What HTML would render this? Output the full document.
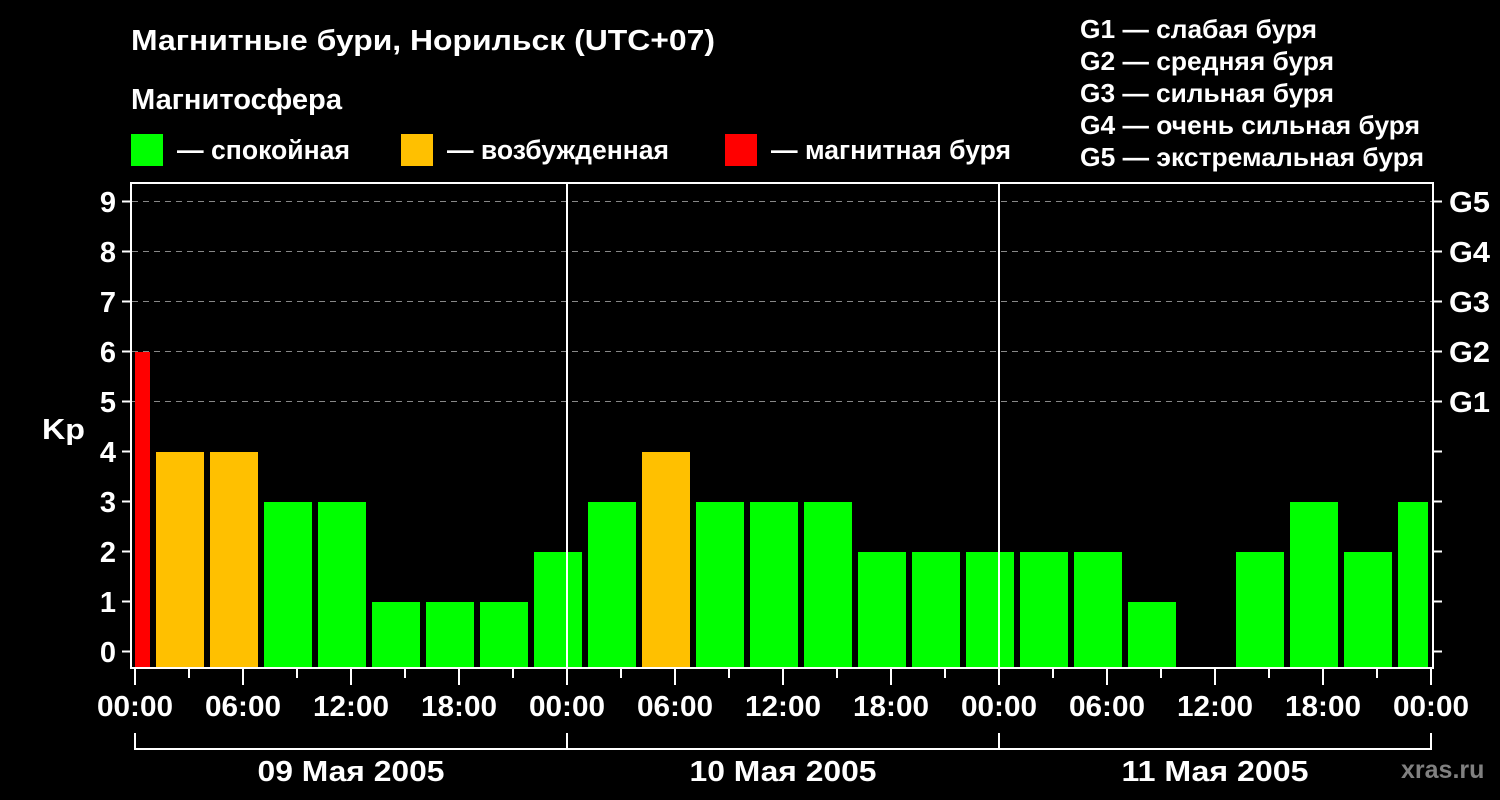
<!DOCTYPE html>
<html><head><meta charset="utf-8"><style>
html,body{margin:0;padding:0;background:#000;}
svg{display:block}
text{font-family:"Liberation Sans",sans-serif;font-weight:bold;fill:#fff}
</style></head><body>
<svg width="1500" height="800" viewBox="0 0 1500 800" xmlns="http://www.w3.org/2000/svg">
<rect width="1500" height="800" fill="#000"/>
<text x="131" y="50" font-size="29" textLength="584" lengthAdjust="spacingAndGlyphs">Магнитные бури, Норильск (UTC+07)</text>
<text x="131" y="109" font-size="29" textLength="211" lengthAdjust="spacingAndGlyphs">Магнитосфера</text>
<rect x="131" y="134" width="32" height="32" fill="#00ff00"/>
<text x="177" y="159" font-size="27" textLength="173" lengthAdjust="spacingAndGlyphs">— спокойная</text>
<rect x="401" y="134" width="32" height="32" fill="#ffc000"/>
<text x="447" y="159" font-size="27" textLength="222" lengthAdjust="spacingAndGlyphs">— возбужденная</text>
<rect x="725" y="134" width="32" height="32" fill="#ff0000"/>
<text x="771" y="159" font-size="27" textLength="240" lengthAdjust="spacingAndGlyphs">— магнитная буря</text>
<g font-size="26">
<text x="1080" y="38" textLength="237" lengthAdjust="spacingAndGlyphs">G1 — слабая буря</text>
<text x="1080" y="70" textLength="254" lengthAdjust="spacingAndGlyphs">G2 — средняя буря</text>
<text x="1080" y="102" textLength="254" lengthAdjust="spacingAndGlyphs">G3 — сильная буря</text>
<text x="1080" y="134" textLength="340" lengthAdjust="spacingAndGlyphs">G4 — очень сильная буря</text>
<text x="1080" y="166" textLength="344" lengthAdjust="spacingAndGlyphs">G5 — экстремальная буря</text>
</g>
<g stroke="#888" stroke-width="1" stroke-dasharray="6,5">
<line x1="132" y1="201.5" x2="1432" y2="201.5"/>
<line x1="132" y1="251.5" x2="1432" y2="251.5"/>
<line x1="132" y1="301.5" x2="1432" y2="301.5"/>
<line x1="132" y1="351.5" x2="1432" y2="351.5"/>
<line x1="132" y1="401.5" x2="1432" y2="401.5"/>
</g>
<rect x="135" y="352" width="15" height="316" fill="#ff0000"/>
<g>
<rect x="156" y="452" width="48" height="216" fill="#ffc000"/>
<rect x="210" y="452" width="48" height="216" fill="#ffc000"/>
<rect x="264" y="502" width="48" height="166" fill="#00ff00"/>
<rect x="318" y="502" width="48" height="166" fill="#00ff00"/>
<rect x="372" y="602" width="48" height="66" fill="#00ff00"/>
<rect x="426" y="602" width="48" height="66" fill="#00ff00"/>
<rect x="480" y="602" width="48" height="66" fill="#00ff00"/>
<rect x="534" y="552" width="48" height="116" fill="#00ff00"/>
<rect x="588" y="502" width="48" height="166" fill="#00ff00"/>
<rect x="642" y="452" width="48" height="216" fill="#ffc000"/>
<rect x="696" y="502" width="48" height="166" fill="#00ff00"/>
<rect x="750" y="502" width="48" height="166" fill="#00ff00"/>
<rect x="804" y="502" width="48" height="166" fill="#00ff00"/>
<rect x="858" y="552" width="48" height="116" fill="#00ff00"/>
<rect x="912" y="552" width="48" height="116" fill="#00ff00"/>
<rect x="966" y="552" width="48" height="116" fill="#00ff00"/>
<rect x="1020" y="552" width="48" height="116" fill="#00ff00"/>
<rect x="1074" y="552" width="48" height="116" fill="#00ff00"/>
<rect x="1128" y="602" width="48" height="66" fill="#00ff00"/>
<rect x="1236" y="552" width="48" height="116" fill="#00ff00"/>
<rect x="1290" y="502" width="48" height="166" fill="#00ff00"/>
<rect x="1344" y="552" width="48" height="116" fill="#00ff00"/>
<rect x="1398" y="502" width="30" height="166" fill="#00ff00"/>
</g>
<g stroke="#fff" fill="none">
<rect x="131" y="183" width="1302" height="485" stroke-width="2"/>
<line x1="567" y1="183" x2="567" y2="668" stroke-width="2"/>
<line x1="999" y1="183" x2="999" y2="668" stroke-width="2"/>
<g stroke-width="2">
<line x1="122" y1="201.5" x2="131" y2="201.5"/><line x1="122" y1="251.5" x2="131" y2="251.5"/>
<line x1="122" y1="301.5" x2="131" y2="301.5"/><line x1="122" y1="351.5" x2="131" y2="351.5"/>
<line x1="122" y1="401.5" x2="131" y2="401.5"/><line x1="122" y1="451.5" x2="131" y2="451.5"/>
<line x1="122" y1="501.5" x2="131" y2="501.5"/><line x1="122" y1="551.5" x2="131" y2="551.5"/>
<line x1="122" y1="601.5" x2="131" y2="601.5"/><line x1="122" y1="651.5" x2="131" y2="651.5"/>
<line x1="1433" y1="201.5" x2="1442" y2="201.5"/><line x1="1433" y1="251.5" x2="1442" y2="251.5"/>
<line x1="1433" y1="301.5" x2="1442" y2="301.5"/><line x1="1433" y1="351.5" x2="1442" y2="351.5"/>
<line x1="1433" y1="401.5" x2="1442" y2="401.5"/><line x1="1433" y1="451.5" x2="1442" y2="451.5"/>
<line x1="1433" y1="501.5" x2="1442" y2="501.5"/><line x1="1433" y1="551.5" x2="1442" y2="551.5"/>
<line x1="1433" y1="601.5" x2="1442" y2="601.5"/><line x1="1433" y1="651.5" x2="1442" y2="651.5"/>
</g>
<g stroke-width="2">
<line x1="135" y1="669" x2="135" y2="685"/><line x1="189" y1="669" x2="189" y2="678"/>
<line x1="243" y1="669" x2="243" y2="685"/><line x1="297" y1="669" x2="297" y2="678"/>
<line x1="351" y1="669" x2="351" y2="685"/><line x1="405" y1="669" x2="405" y2="678"/>
<line x1="459" y1="669" x2="459" y2="685"/><line x1="513" y1="669" x2="513" y2="678"/>
<line x1="567" y1="669" x2="567" y2="685"/><line x1="621" y1="669" x2="621" y2="678"/>
<line x1="675" y1="669" x2="675" y2="685"/><line x1="729" y1="669" x2="729" y2="678"/>
<line x1="783" y1="669" x2="783" y2="685"/><line x1="837" y1="669" x2="837" y2="678"/>
<line x1="891" y1="669" x2="891" y2="685"/><line x1="945" y1="669" x2="945" y2="678"/>
<line x1="999" y1="669" x2="999" y2="685"/><line x1="1053" y1="669" x2="1053" y2="678"/>
<line x1="1107" y1="669" x2="1107" y2="685"/><line x1="1161" y1="669" x2="1161" y2="678"/>
<line x1="1215" y1="669" x2="1215" y2="685"/><line x1="1269" y1="669" x2="1269" y2="678"/>
<line x1="1323" y1="669" x2="1323" y2="685"/><line x1="1377" y1="669" x2="1377" y2="678"/>
<line x1="1431" y1="669" x2="1431" y2="685"/>
</g>
<polyline points="135,733 135,749 1431,749 1431,733" stroke-width="2"/>
<line x1="567" y1="733" x2="567" y2="749" stroke-width="2"/>
<line x1="999" y1="733" x2="999" y2="749" stroke-width="2"/>
</g>
<g font-size="29" text-anchor="end">
<text x="116" y="212">9</text><text x="116" y="262">8</text><text x="116" y="312">7</text>
<text x="116" y="362">6</text><text x="116" y="412">5</text><text x="116" y="462">4</text>
<text x="116" y="512">3</text><text x="116" y="562">2</text><text x="116" y="612">1</text>
<text x="116" y="662">0</text>
</g>
<text x="42" y="439" font-size="29" textLength="43" lengthAdjust="spacingAndGlyphs">Kp</text>
<g font-size="29">
<text x="1449" y="212" textLength="41" lengthAdjust="spacingAndGlyphs">G5</text>
<text x="1449" y="262" textLength="41" lengthAdjust="spacingAndGlyphs">G4</text>
<text x="1449" y="312" textLength="41" lengthAdjust="spacingAndGlyphs">G3</text>
<text x="1449" y="362" textLength="41" lengthAdjust="spacingAndGlyphs">G2</text>
<text x="1449" y="412" textLength="41" lengthAdjust="spacingAndGlyphs">G1</text>
</g>
<g font-size="29" text-anchor="middle">
<text x="135" y="716" textLength="76" lengthAdjust="spacingAndGlyphs">00:00</text>
<text x="243" y="716" textLength="76" lengthAdjust="spacingAndGlyphs">06:00</text>
<text x="351" y="716" textLength="76" lengthAdjust="spacingAndGlyphs">12:00</text>
<text x="459" y="716" textLength="76" lengthAdjust="spacingAndGlyphs">18:00</text>
<text x="567" y="716" textLength="76" lengthAdjust="spacingAndGlyphs">00:00</text>
<text x="675" y="716" textLength="76" lengthAdjust="spacingAndGlyphs">06:00</text>
<text x="783" y="716" textLength="76" lengthAdjust="spacingAndGlyphs">12:00</text>
<text x="891" y="716" textLength="76" lengthAdjust="spacingAndGlyphs">18:00</text>
<text x="999" y="716" textLength="76" lengthAdjust="spacingAndGlyphs">00:00</text>
<text x="1107" y="716" textLength="76" lengthAdjust="spacingAndGlyphs">06:00</text>
<text x="1215" y="716" textLength="76" lengthAdjust="spacingAndGlyphs">12:00</text>
<text x="1323" y="716" textLength="76" lengthAdjust="spacingAndGlyphs">18:00</text>
<text x="1431" y="716" textLength="76" lengthAdjust="spacingAndGlyphs">00:00</text>
<text x="351" y="781" textLength="187" lengthAdjust="spacingAndGlyphs">09 Мая 2005</text>
<text x="783" y="781" textLength="187" lengthAdjust="spacingAndGlyphs">10 Мая 2005</text>
<text x="1215" y="781" textLength="187" lengthAdjust="spacingAndGlyphs">11 Мая 2005</text>
</g>
<text x="1401" y="778" font-size="25" style="fill:#808080">xras.ru</text>
</svg>
</body></html>
